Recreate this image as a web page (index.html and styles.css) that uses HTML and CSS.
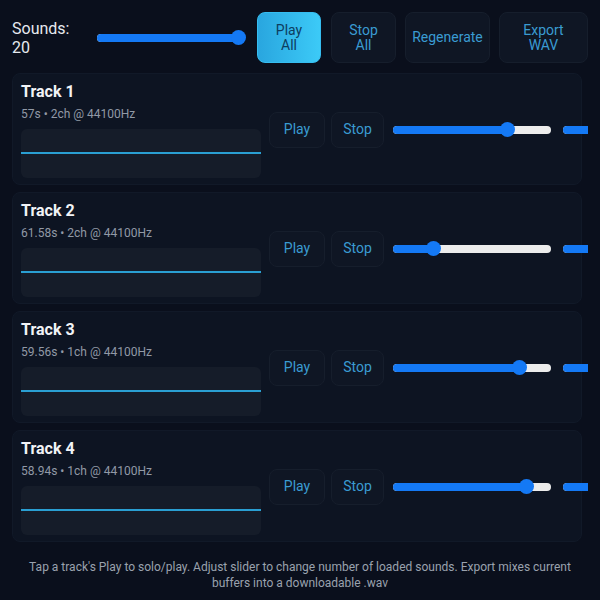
FILE: index.html
```html
<!DOCTYPE html>
<html lang="en">
<head>
    <meta charset="UTF-8">
    <meta name="viewport" content="width=device-width, initial-scale=1.0">
    <title>Sound Mixer</title>
    <link rel="stylesheet" href="styles.css">
</head>
<body>
    <div class="app">
        <div class="toolbar">
            <div class="count-label">Sounds:<br>20</div>
            <div class="slider count-slider">
                <div class="slider-fill" style="width: 100%"></div>
                <div class="slider-thumb" style="left: 100%"></div>
            </div>
            <button class="btn btn-primary">Play<br>All</button>
            <button class="btn btn-wide-1">Stop<br>All</button>
            <button class="btn btn-wide-2">Regenerate</button>
            <button class="btn btn-wide-3">Export<br>WAV</button>
        </div>

        <div class="tracks">
            <div class="track">
                <div class="track-info">
                    <div class="track-title">Track 1</div>
                    <div class="track-meta">57s • 2ch @ 44100Hz</div>
                    <div class="wave"><div class="wave-line"></div></div>
                </div>
                <button class="btn btn-small btn-play">Play</button>
                <button class="btn btn-small btn-stop">Stop</button>
                <div class="slider track-slider">
                    <div class="slider-fill" style="width: 72%"></div>
                    <div class="slider-thumb" style="left: 72%"></div>
                </div>
                <div class="slider extra-slider"><div class="slider-fill" style="width: 100%"></div></div>
            </div>

            <div class="track">
                <div class="track-info">
                    <div class="track-title">Track 2</div>
                    <div class="track-meta">61.58s • 2ch @ 44100Hz</div>
                    <div class="wave"><div class="wave-line"></div></div>
                </div>
                <button class="btn btn-small btn-play">Play</button>
                <button class="btn btn-small btn-stop">Stop</button>
                <div class="slider track-slider">
                    <div class="slider-fill" style="width: 25%"></div>
                    <div class="slider-thumb" style="left: 25%"></div>
                </div>
                <div class="slider extra-slider"><div class="slider-fill" style="width: 100%"></div></div>
            </div>

            <div class="track">
                <div class="track-info">
                    <div class="track-title">Track 3</div>
                    <div class="track-meta">59.56s • 1ch @ 44100Hz</div>
                    <div class="wave"><div class="wave-line"></div></div>
                </div>
                <button class="btn btn-small btn-play">Play</button>
                <button class="btn btn-small btn-stop">Stop</button>
                <div class="slider track-slider">
                    <div class="slider-fill" style="width: 80%"></div>
                    <div class="slider-thumb" style="left: 80%"></div>
                </div>
                <div class="slider extra-slider"><div class="slider-fill" style="width: 100%"></div></div>
            </div>

            <div class="track">
                <div class="track-info">
                    <div class="track-title">Track 4</div>
                    <div class="track-meta">58.94s • 1ch @ 44100Hz</div>
                    <div class="wave"><div class="wave-line"></div></div>
                </div>
                <button class="btn btn-small btn-play">Play</button>
                <button class="btn btn-small btn-stop">Stop</button>
                <div class="slider track-slider">
                    <div class="slider-fill" style="width: 84%"></div>
                    <div class="slider-thumb" style="left: 84%"></div>
                </div>
                <div class="slider extra-slider"><div class="slider-fill" style="width: 100%"></div></div>
            </div>
        </div>

        <p class="hint">Tap a track's Play to solo/play. Adjust slider to change number of loaded sounds. Export mixes current buffers into a downloadable .wav</p>
    </div>
</body>
</html>
```

FILE: styles.css
```css
* {
    margin: 0;
    padding: 0;
    box-sizing: border-box;
    font-family: Roboto, 'Noto Sans', sans-serif;
}

body {
    background-color: #0a0f1c;
    color: #e6e9ef;
    width: 600px;
    height: 600px;
    overflow: hidden;
}

.app {
    padding: 12px;
}

.toolbar {
    display: flex;
    align-items: center;
    height: 51px;
}

.count-label {
    font-size: 16px;
    line-height: 19px;
    color: #e6e9ef;
    width: 85px;
    flex-shrink: 0;
}

.slider {
    position: relative;
    height: 8px;
    border-radius: 4px;
    background-color: #ececec;
    flex-shrink: 0;
}

.slider-fill {
    height: 100%;
    border-radius: 4px;
    background-color: #1479f5;
}

.slider-thumb {
    position: absolute;
    top: 50%;
    width: 15px;
    height: 15px;
    margin-left: -7px;
    margin-top: -7.5px;
    border-radius: 50%;
    background-color: #1479f5;
}

.count-slider {
    width: 146px;
    margin-right: 14px;
}

.count-slider .slider-thumb {
    margin-left: -12px;
}

.btn {
    background-color: #0f1624;
    border: 1px solid #161e2c;
    border-radius: 8px;
    color: #3a9bd2;
    font-size: 14px;
    line-height: 15px;
    cursor: pointer;
    flex-shrink: 0;
}

.toolbar .btn {
    height: 51px;
    margin-right: 9px;
}

.toolbar .btn-primary {
    width: 64px;
    margin-right: 10px;
    background: linear-gradient(90deg, #29a6df, #3ccaf7);
    border-color: #36bdf0;
    color: #0d3d60;
}

.btn-wide-1 {
    width: 65px;
}

.btn-wide-2 {
    width: 85px;
}

.btn-wide-3 {
    width: 89px;
}

.tracks {
    margin-top: 10px;
    width: 576px;
    overflow: hidden;
}

.track {
    display: flex;
    align-items: center;
    width: 570px;
    height: 112px;
    margin-bottom: 7px;
    padding: 9px 8px 8px 8px;
    background-color: #0d1422;
    border: 1px solid #111928;
    border-radius: 8px;
}

.track-info {
    width: 240px;
    flex-shrink: 0;
    margin-right: 8px;
}

.track-title {
    font-size: 16px;
    font-weight: bold;
    line-height: 20px;
    color: #f1f3f6;
}

.track-meta {
    font-size: 12px;
    color: #9199a6;
    line-height: 14px;
    margin-top: 5px;
}

.wave {
    display: flex;
    align-items: center;
    height: 49px;
    margin-top: 8px;
    background-color: #151c29;
    border-radius: 6px;
}

.wave-line {
    width: 100%;
    height: 2px;
    background-color: #2a9fd2;
}

.btn-small {
    height: 36px;
    margin-right: 6px;
}

.btn-play {
    width: 56px;
}

.btn-stop {
    width: 53px;
}

.track-slider {
    width: 158px;
    margin-left: 3px;
}

.extra-slider {
    width: 40px;
    margin-left: 12px;
}

.hint {
    margin-top: 10px;
    text-align: center;
    font-size: 12px;
    line-height: 16px;
    color: #9aa2ae;
}
```
